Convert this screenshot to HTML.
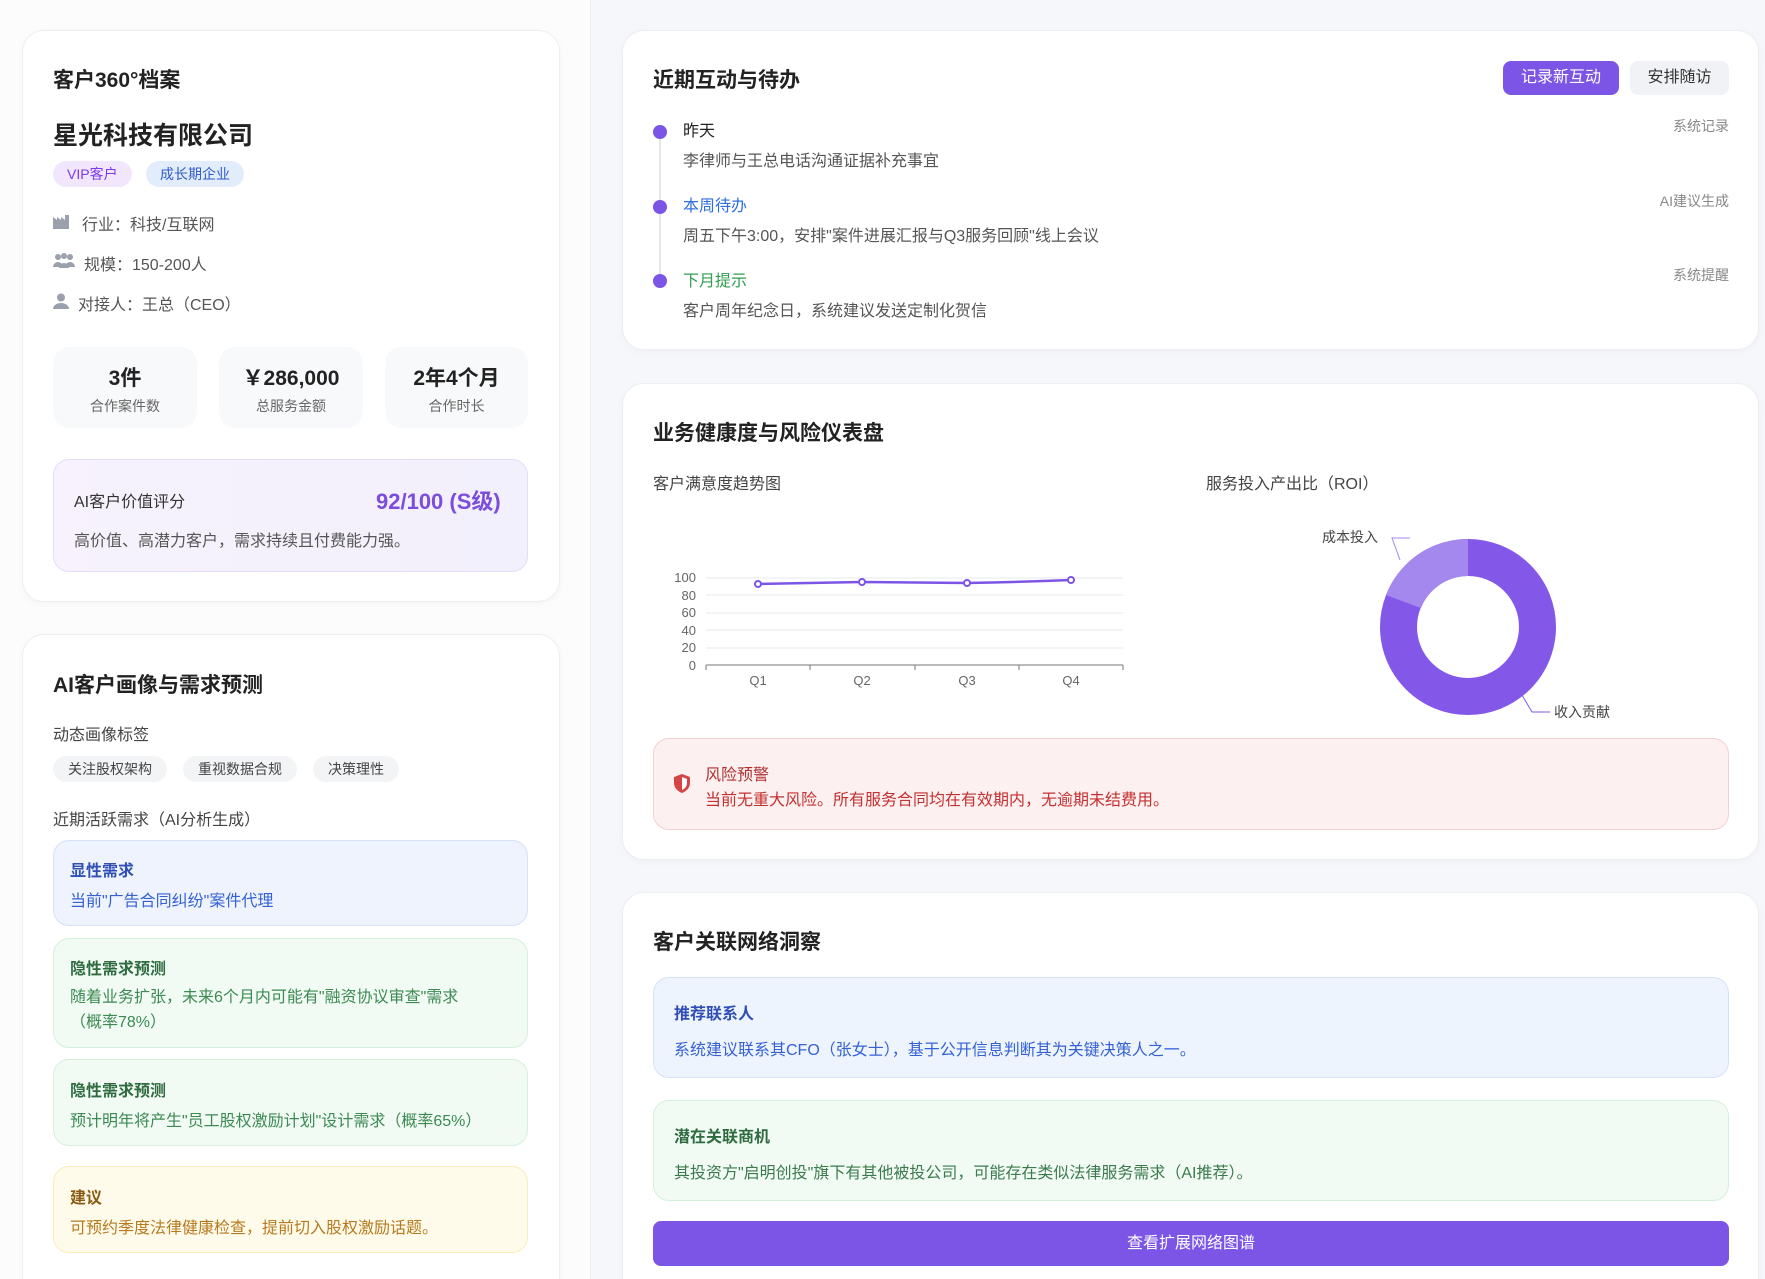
<!DOCTYPE html>
<html><head><meta charset="utf-8"><style>
*{box-sizing:border-box;margin:0;padding:0}
html,body{width:1765px;height:1279px;overflow:hidden}
body{background:#f6f7fb;font-family:"Liberation Sans","Noto Sans CJK SC",sans-serif;color:#222}
#w{position:relative;width:1765px;height:1279px;overflow:hidden}
.a{position:absolute}
.left{left:0;top:0;width:591px;height:1279px;background:#fcfcfd;border-right:1px solid #eceef3}
.card{position:absolute;background:#fff;border:1px solid #eceef2;border-radius:22px;box-shadow:0 2px 8px rgba(0,0,0,.03)}
.h{font-size:21px;font-weight:bold;color:#222;position:absolute}
.t{position:absolute;white-space:nowrap}
.box{position:absolute;border-radius:16px}
</style></head><body><div id="w">
<div class="a left"></div>

<div class="card" style="left:22px;top:30px;width:538px;height:572px"></div>
<div class="h" style="left:53px;top:64px">客户360°档案</div>
<div class="t" style="left:53px;top:116px;font-size:25px;font-weight:bold">星光科技有限公司</div>
<div class="t" style="left:53px;top:161px;height:26px;line-height:26px;padding:0 14px;border-radius:13px;background:#f1e6fb;color:#7c3aed;font-size:14px">VIP客户</div>
<div class="t" style="left:146px;top:161px;height:26px;line-height:26px;padding:0 14px;border-radius:13px;background:#e3ecfb;color:#2f5cc9;font-size:14px">成长期企业</div>
<svg class="a" style="left:53px;top:215px" width="16" height="14"><path d="M0 14V2l4 3V2l4 3V2l4 3V0h4v14z" fill="#9aa1ad"/></svg>
<div class="t" style="left:82px;top:211px;font-size:16px;color:#555">行业：科技/互联网</div>
<svg class="a" style="left:53px;top:253px" width="22" height="16"><circle cx="5" cy="4" r="3" fill="#9aa1ad"/><circle cx="11" cy="3" r="3" fill="#9aa1ad"/><circle cx="17" cy="4" r="3" fill="#9aa1ad"/><path d="M0 14a5 5 0 0 1 10 0zM6 15a5 5 0 0 1 10 0zM12 14a5 5 0 0 1 10 0z" fill="#9aa1ad"/></svg>
<div class="t" style="left:84px;top:251px;font-size:16px;color:#555">规模：150-200人</div>
<svg class="a" style="left:53px;top:293px" width="16" height="16"><circle cx="8" cy="4.5" r="4" fill="#9aa1ad"/><path d="M0 16a8 6 0 0 1 16 0z" fill="#9aa1ad"/></svg>
<div class="t" style="left:78px;top:291px;font-size:16px;color:#555">对接人：王总（CEO）</div>

<div class="box" style="left:53px;top:347px;width:144px;height:81px;background:#f8f9fb"></div>
<div class="box" style="left:219px;top:347px;width:144px;height:81px;background:#f8f9fb"></div>
<div class="box" style="left:385px;top:347px;width:143px;height:81px;background:#f8f9fb"></div>
<div class="t" style="left:53px;width:144px;text-align:center;top:362px;font-size:21px;font-weight:bold">3件</div>
<div class="t" style="left:53px;width:144px;text-align:center;top:396px;font-size:14px;color:#666">合作案件数</div>
<div class="t" style="left:219px;width:144px;text-align:center;top:362px;font-size:21px;font-weight:bold">￥286,000</div>
<div class="t" style="left:219px;width:144px;text-align:center;top:396px;font-size:14px;color:#666">总服务金额</div>
<div class="t" style="left:385px;width:143px;text-align:center;top:362px;font-size:21px;font-weight:bold">2年4个月</div>
<div class="t" style="left:385px;width:143px;text-align:center;top:396px;font-size:14px;color:#666">合作时长</div>

<div class="box" style="left:53px;top:459px;width:475px;height:113px;background:linear-gradient(90deg,#f7f2fd,#f2f0fc);border:1px solid #e6dcf8"></div>
<div class="t" style="left:74px;top:488px;font-size:16px;color:#333">AI客户价值评分</div>
<div class="t" style="left:376px;top:484px;font-size:22px;font-weight:bold;color:#7c4ddd">92/100 (S级)</div>
<div class="t" style="left:74px;top:527px;font-size:16px;color:#555">高价值、高潜力客户，需求持续且付费能力强。</div>

<div class="card" style="left:22px;top:634px;width:538px;height:680px"></div>
<div class="h" style="left:53px;top:669px">AI客户画像与需求预测</div>
<div class="t" style="left:53px;top:721px;font-size:16px;color:#444">动态画像标签</div>
<div class="t" style="left:53px;top:756px;height:26px;line-height:26px;padding:0 15px;border-radius:13px;background:#f3f4f6;font-size:14px;color:#444">关注股权架构</div>
<div class="t" style="left:183px;top:756px;height:26px;line-height:26px;padding:0 15px;border-radius:13px;background:#f3f4f6;font-size:14px;color:#444">重视数据合规</div>
<div class="t" style="left:313px;top:756px;height:26px;line-height:26px;padding:0 15px;border-radius:13px;background:#f3f4f6;font-size:14px;color:#444">决策理性</div>
<div class="t" style="left:53px;top:806px;font-size:16px;color:#444">近期活跃需求（AI分析生成）</div>

<div class="box" style="left:53px;top:840px;width:475px;height:86px;background:#eef3fd;border:1px solid #d6e1f7"></div>
<div class="t" style="left:70px;top:857px;font-size:16px;font-weight:bold;color:#2f4fb5">显性需求</div>
<div class="t" style="left:70px;top:887px;font-size:16px;color:#3561d4">当前"广告合同纠纷"案件代理</div>
<div class="box" style="left:53px;top:938px;width:475px;height:110px;background:#f1fbf4;border:1px solid #d5f0dd"></div>
<div class="t" style="left:70px;top:955px;font-size:16px;font-weight:bold;color:#2e6b3f">隐性需求预测</div>
<div class="t" style="left:70px;top:985px;font-size:16px;color:#3c8a52;line-height:25px;white-space:normal;width:430px">随着业务扩张，未来6个月内可能有"融资协议审查"需求<br>（概率78%）</div>
<div class="box" style="left:53px;top:1059px;width:475px;height:87px;background:#f1fbf4;border:1px solid #d5f0dd"></div>
<div class="t" style="left:70px;top:1077px;font-size:16px;font-weight:bold;color:#2e6b3f">隐性需求预测</div>
<div class="t" style="left:70px;top:1107px;font-size:16px;color:#3c8a52">预计明年将产生"员工股权激励计划"设计需求（概率65%）</div>
<div class="box" style="left:53px;top:1166px;width:475px;height:87px;background:#fffbea;border:1px solid #f7ecbc"></div>
<div class="t" style="left:70px;top:1184px;font-size:16px;font-weight:bold;color:#8a5a12">建议</div>
<div class="t" style="left:70px;top:1214px;font-size:16px;color:#b7791f">可预约季度法律健康检查，提前切入股权激励话题。</div>

<div class="card" style="left:622px;top:30px;width:1137px;height:320px"></div>
<div class="h" style="left:653px;top:64px">近期互动与待办</div>
<div class="t" style="left:1503px;top:61px;width:116px;height:34px;line-height:34px;text-align:center;border-radius:8px;background:#7c55e6;color:#fff;font-size:16px">记录新互动</div>
<div class="t" style="left:1630px;top:61px;width:99px;height:34px;line-height:34px;text-align:center;border-radius:8px;background:#f1f2f5;color:#333;font-size:16px">安排随访</div>
<div class="a" style="left:659px;top:132px;width:2px;height:150px;background:#e6e7ec"></div>
<div class="a" style="left:653px;top:125px;width:14px;height:14px;border-radius:7px;background:#7c55e6"></div>
<div class="a" style="left:653px;top:200px;width:14px;height:14px;border-radius:7px;background:#7c55e6"></div>
<div class="a" style="left:653px;top:274px;width:14px;height:14px;border-radius:7px;background:#7c55e6"></div>
<div class="t" style="left:683px;top:117px;font-size:16px;color:#222">昨天</div>
<div class="t" style="left:683px;top:147px;font-size:16px;color:#555">李律师与王总电话沟通证据补充事宜</div>
<div class="t" style="left:683px;top:192px;font-size:16px;color:#2f6fe0">本周待办</div>
<div class="t" style="left:683px;top:222px;font-size:16px;color:#555">周五下午3:00，安排"案件进展汇报与Q3服务回顾"线上会议</div>
<div class="t" style="left:683px;top:267px;font-size:16px;color:#2f9e4f">下月提示</div>
<div class="t" style="left:683px;top:297px;font-size:16px;color:#555">客户周年纪念日，系统建议发送定制化贺信</div>
<div class="t" style="right:36px;top:116px;font-size:14px;color:#888">系统记录</div>
<div class="t" style="right:36px;top:191px;font-size:14px;color:#888">AI建议生成</div>
<div class="t" style="right:36px;top:265px;font-size:14px;color:#888">系统提醒</div>

<div class="card" style="left:622px;top:383px;width:1137px;height:477px"></div>
<div class="h" style="left:653px;top:417px">业务健康度与风险仪表盘</div>
<div class="t" style="left:653px;top:470px;font-size:16px;color:#444">客户满意度趋势图</div>
<div class="t" style="left:1206px;top:470px;font-size:16px;color:#444">服务投入产出比（ROI）</div>
<svg class="a" style="left:660px;top:560px" width="480" height="135" font-family="Liberation Sans" font-size="13" fill="#666">
<g stroke="#e8e8ec"><line x1="46" y1="18" x2="463" y2="18"/><line x1="46" y1="35" x2="463" y2="35"/><line x1="46" y1="53" x2="463" y2="53"/><line x1="46" y1="70" x2="463" y2="70"/><line x1="46" y1="88" x2="463" y2="88"/></g>
<line x1="46" y1="105" x2="463" y2="105" stroke="#777"/>
<g stroke="#777"><line x1="46" y1="105" x2="46" y2="110"/><line x1="150" y1="105" x2="150" y2="110"/><line x1="255" y1="105" x2="255" y2="110"/><line x1="359" y1="105" x2="359" y2="110"/><line x1="463" y1="105" x2="463" y2="110"/></g>
<g text-anchor="end"><text x="36" y="22">100</text><text x="36" y="40">80</text><text x="36" y="57">60</text><text x="36" y="75">40</text><text x="36" y="92">20</text><text x="36" y="110">0</text></g>
<g text-anchor="middle"><text x="98" y="125">Q1</text><text x="202" y="125">Q2</text><text x="307" y="125">Q3</text><text x="411" y="125">Q4</text></g>
<path d="M98 24 L202 22 L307 23 Q360 22 411 20" stroke="#7c55e6" stroke-width="2.5" fill="none"/>
<g fill="#fff" stroke="#7c55e6" stroke-width="2"><circle cx="98" cy="24" r="3"/><circle cx="202" cy="22" r="3"/><circle cx="307" cy="23" r="3"/><circle cx="411" cy="20" r="3"/></g>
</svg>
<svg class="a" style="left:1300px;top:520px" width="360" height="220" font-family="Liberation Sans,Noto Sans CJK SC" font-size="14" fill="#444">
<circle cx="168" cy="107" r="69.5" fill="none" stroke="#8358e8" stroke-width="37"/>
<path d="M168 19 A88 88 0 0 0 86 75 L121 88 A51 51 0 0 1 168 56 Z" fill="#a488ee"/>
<path d="M110 18 L92 18 L100 40" stroke="#a488ee" fill="none"/>
<text x="22" y="22">成本投入</text>
<path d="M222 175 L232 192 L250 192" stroke="#8358e8" fill="none"/>
<text x="254" y="197">收入贡献</text>
</svg>
<div class="box" style="left:653px;top:738px;width:1076px;height:92px;background:#fdf0f0;border:1px solid #f5cfcf"></div>
<svg class="a" style="left:673px;top:773px" width="18" height="21"><path d="M9 1 L17 4 V10 C17 15 13 18.5 9 20 C5 18.5 1 15 1 10 V4 Z" fill="#d64545"/><path d="M9 4 L14 6 V10 C14 13.5 11.5 16 9 17 Z" fill="#fff"/></svg>
<div class="t" style="left:705px;top:761px;font-size:16px;color:#b03030">风险预警</div>
<div class="t" style="left:705px;top:786px;font-size:16px;color:#c53030">当前无重大风险。所有服务合同均在有效期内，无逾期未结费用。</div>

<div class="card" style="left:622px;top:892px;width:1137px;height:420px"></div>
<div class="h" style="left:653px;top:926px">客户关联网络洞察</div>
<div class="box" style="left:653px;top:977px;width:1076px;height:101px;background:#eef4fd;border:1px solid #d4e2f7"></div>
<div class="t" style="left:674px;top:1000px;font-size:16px;font-weight:bold;color:#2f4fb5">推荐联系人</div>
<div class="t" style="left:674px;top:1036px;font-size:16px;color:#3561d4">系统建议联系其CFO（张女士），基于公开信息判断其为关键决策人之一。</div>
<div class="box" style="left:653px;top:1100px;width:1076px;height:101px;background:#f1fbf4;border:1px solid #d5f0dd"></div>
<div class="t" style="left:674px;top:1123px;font-size:16px;font-weight:bold;color:#2e6b3f">潜在关联商机</div>
<div class="t" style="left:674px;top:1159px;font-size:16px;color:#3c7a4d">其投资方"启明创投"旗下有其他被投公司，可能存在类似法律服务需求（AI推荐）。</div>
<div class="t" style="left:653px;top:1221px;width:1076px;height:45px;line-height:45px;text-align:center;border-radius:8px;background:#7c55e6;color:#fff;font-size:16px">查看扩展网络图谱</div>
</div></body></html>
